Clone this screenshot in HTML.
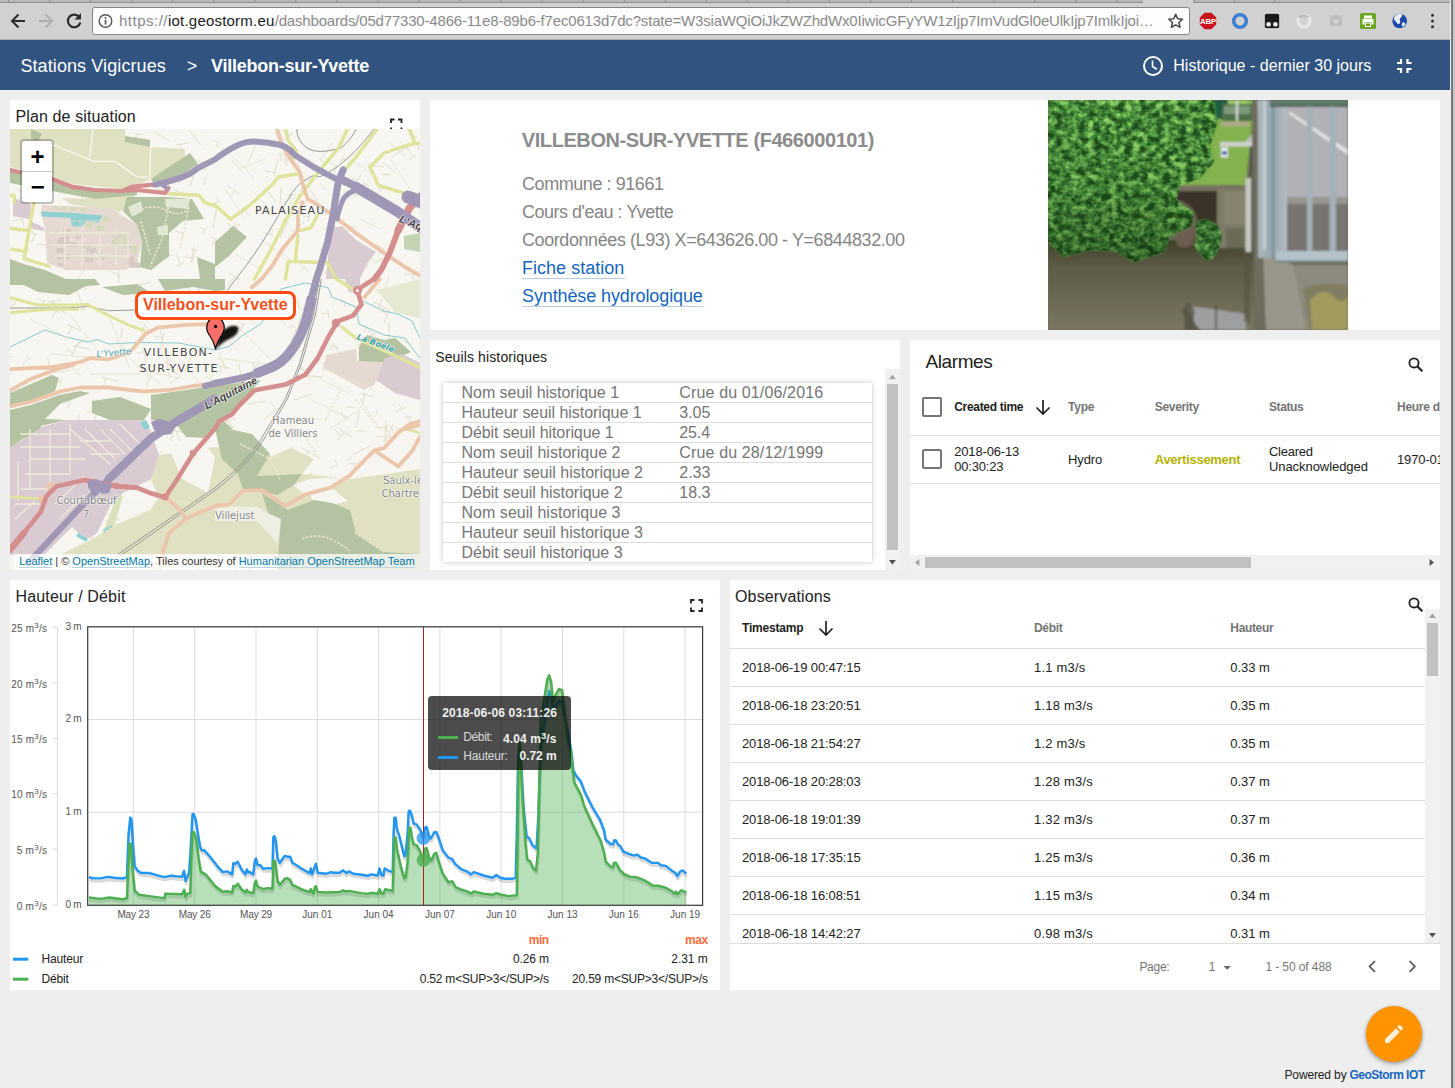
<!DOCTYPE html>
<html lang="fr">
<head>
<meta charset="utf-8">
<title>Villebon-sur-Yvette</title>
<style>
html,body{margin:0;padding:0;}
body{width:1455px;height:1088px;overflow:hidden;background:#eeeeee;font-family:"Liberation Sans",sans-serif;color:#212121;position:relative;}
.abs{position:absolute;}
.t{position:absolute;white-space:nowrap;line-height:1;}
svg{position:absolute;display:block;overflow:visible;}
#chrome{left:0;top:0;width:1455px;height:40px;background:#d1d1d1;}
#hdr{left:0;top:40px;width:1450px;height:50px;background:#30547f;color:#fff;}
.w{position:absolute;background:#fff;overflow:hidden;}
#wmap{left:10px;top:100px;width:410px;height:470px;}
#winfo{left:430px;top:100px;width:1010px;height:230px;}
#wseuil{left:430px;top:340px;width:470px;height:230px;}
#walarm{left:910px;top:340px;width:530px;height:230px;}
#wchart{left:10px;top:580px;width:710px;height:410px;}
#wobs{left:730px;top:580px;width:710px;height:410px;}
#edge{left:1450px;top:0;width:5px;height:1088px;background:linear-gradient(90deg,#eeeeee 0,#eeeeee .6px,#a8a8a8 .7px,#6c6c6c 1.8px,#787878 2.6px,#c4c4c4 3.3px,#c8c8c8 4.5px,#909090 5px);}
.ln{position:absolute;background:#e0e0e0;height:1px;}
.cb{position:absolute;width:16px;height:16px;border:2px solid #757575;border-radius:2px;}
.ml{position:absolute;white-space:nowrap;line-height:1;font-family:"DejaVu Sans","Liberation Sans",sans-serif;text-shadow:0 0 2px #fff,0 0 2px #fff,0 0 1px #fff;}

</style>
</head>
<body>
<div id="chrome" class="abs"><div class="abs" style="left:0;top:0;width:1143px;height:3px;background:#b8b8b8;border-bottom:1px solid #8f8f8f;box-sizing:border-box"></div>
<div class="abs" style="left:1193px;top:0;width:262px;height:3px;background:#b8b8b8;border-bottom:1px solid #8f8f8f;box-sizing:border-box"></div>
<svg style="left:0;top:0" width="1455" height="3" viewBox="0 0 1455 3"><rect x="8.0" y="0" width="1" height="2.500" fill="#8f8f8f"/><rect x="49.0" y="0" width="1" height="2.500" fill="#8f8f8f"/><rect x="90.1" y="0" width="1" height="2.500" fill="#8f8f8f"/><rect x="131.1" y="0" width="1" height="2.500" fill="#8f8f8f"/><rect x="172.2" y="0" width="1" height="2.500" fill="#8f8f8f"/><rect x="213.2" y="0" width="1" height="2.500" fill="#8f8f8f"/><rect x="254.3" y="0" width="1" height="2.500" fill="#8f8f8f"/><rect x="295.3" y="0" width="1" height="2.500" fill="#8f8f8f"/><rect x="336.4" y="0" width="1" height="2.500" fill="#8f8f8f"/><rect x="377.4" y="0" width="1" height="2.500" fill="#8f8f8f"/><rect x="418.5" y="0" width="1" height="2.500" fill="#8f8f8f"/><rect x="459.5" y="0" width="1" height="2.500" fill="#8f8f8f"/><rect x="500.6" y="0" width="1" height="2.500" fill="#8f8f8f"/><rect x="541.6" y="0" width="1" height="2.500" fill="#8f8f8f"/><rect x="582.7" y="0" width="1" height="2.500" fill="#8f8f8f"/><rect x="623.8" y="0" width="1" height="2.500" fill="#8f8f8f"/><rect x="664.8" y="0" width="1" height="2.500" fill="#8f8f8f"/><rect x="705.8" y="0" width="1" height="2.500" fill="#8f8f8f"/><rect x="746.9" y="0" width="1" height="2.500" fill="#8f8f8f"/><rect x="787.9" y="0" width="1" height="2.500" fill="#8f8f8f"/><rect x="829.0" y="0" width="1" height="2.500" fill="#8f8f8f"/><rect x="870.0" y="0" width="1" height="2.500" fill="#8f8f8f"/><rect x="911.1" y="0" width="1" height="2.500" fill="#8f8f8f"/><rect x="952.1" y="0" width="1" height="2.500" fill="#8f8f8f"/><rect x="993.2" y="0" width="1" height="2.500" fill="#8f8f8f"/><rect x="1034.2" y="0" width="1" height="2.500" fill="#8f8f8f"/><rect x="1075.3" y="0" width="1" height="2.500" fill="#8f8f8f"/><rect x="1116.3" y="0" width="1" height="2.500" fill="#8f8f8f"/><rect x="1193.5" y="0" width="1" height="2.500" fill="#8f8f8f"/><rect x="1233.8" y="0" width="1" height="2.500" fill="#8f8f8f"/><rect x="1274.0" y="0" width="1" height="2.500" fill="#8f8f8f"/></svg>
<div class="abs" style="left:0;top:39px;width:1450px;height:1px;background:#aeaba6"></div>
<div class="abs" style="left:92px;top:7px;width:1098px;height:28px;box-sizing:border-box;background:#fdfdfd;border:1px solid #858585;border-radius:2.500px"></div>
<svg style="left:0;top:0" width="1455" height="40" viewBox="0 0 1455 40">
<g fill="none" stroke="#2b2b2b" stroke-width="2">
<path d="M25 21H12.5M18.5 14.5L12 21l6.500 6.500"/>
</g>
<g fill="none" stroke="#b0b0b0" stroke-width="2">
<path d="M39 21H51.500M45.500 14.500L52 21l-6.500 6.500"/>
</g>
<g fill="none" stroke="#2b2b2b" stroke-width="2.200">
<path d="M79.500 17.500A6.300 6.300 0 1 0 80.300 22.500"/>
</g>
<path d="M81 13v6.500h-6.500z" fill="#2b2b2b"/>
<circle cx="105.500" cy="21" r="6.300" fill="none" stroke="#555" stroke-width="1.400"/>
<rect x="104.700" y="19.800" width="1.700" height="4.700" fill="#555"/><rect x="104.700" y="17" width="1.700" height="1.700" fill="#555"/>
<path d="M1175.700 14.200l2 4.500 4.900.5-3.700 3.300 1.100 4.800-4.300-2.500-4.300 2.500 1.100-4.800-3.700-3.300 4.900-.5z" fill="none" stroke="#444" stroke-width="1.500" stroke-linejoin="round"/>
<!-- ABP -->
<path d="M1204.600 12.800h6.800l4.800 4.800v6.800l-4.800 4.800h-6.800l-4.800-4.800v-6.800z" fill="#c8141c"/>
<text x="1208" y="23.900" font-family="Liberation Sans, sans-serif" font-weight="700" font-size="7.800" fill="#fff" text-anchor="middle" letter-spacing="-0.200">ABP</text>
<!-- blue ring -->
<circle cx="1240" cy="21" r="6.300" fill="none" stroke="#3f7fcf" stroke-width="3.600"/>
<!-- black box -->
<rect x="1264.300" y="13.300" width="15.400" height="15.400" rx="2.500" fill="#1b1b1b" stroke="#f4f4f4" stroke-width="0.800"/>
<circle cx="1268.600" cy="24.300" r="2.400" fill="#e8e8e8"/><circle cx="1275.400" cy="24.300" r="2.400" fill="#e8e8e8"/>
<!-- swirl -->
<circle cx="1304" cy="21" r="6" fill="none" stroke="#e6e6e6" stroke-width="3.500"/>
<path d="M1299 17.500a6 6 0 0 1 9 0" fill="none" stroke="#bdbdbd" stroke-width="3"/>
<!-- camera -->
<path d="M1330 16.500h3l1.200-1.800h3.600l1.200 1.800h3v9.500h-12z" fill="#bdbdbd"/><circle cx="1336" cy="21.300" r="2.600" fill="#d1d1d1"/>
<!-- printer -->
<rect x="1360" y="13" width="16" height="16" rx="1.500" fill="#6aa624"/>
<path d="M1364 15.500h8v3h-8zM1362.500 19h11v5.500h-2v-2.500h-7v2.500h-2zM1365 22.500h6v4.500h-6z" fill="#fff"/>
<rect x="1366" y="23.500" width="4" height="2.500" fill="#6aa624"/>
<!-- globe -->
<circle cx="1399.700" cy="21" r="7.300" fill="#1c4aa8"/>
<path d="M1395 16c2-2 5-2.500 7-1.500 1 1.500-1 2.500-2 4s1 3 0 4.500-3 1-3.500-.5-2.500-2-2.500-3.500.5-2 1-3z" fill="#e9eef8"/>
<path d="M1403 22c1 0 2.500 1 2.500 2.500-1 1.500-2.500 2.500-3.500 2-.500-1.500 0-3.500 1-4.500z" fill="#dfe7f5"/>
<!-- menu -->
<circle cx="1432.500" cy="15.300" r="1.500" fill="#333"/><circle cx="1432.500" cy="21" r="1.500" fill="#333"/><circle cx="1432.500" cy="26.700" r="1.500" fill="#333"/>
</svg>
<span class="t" style="top:13.00px;font-size:15px;left:119.00px;color:#8a8a8a;letter-spacing:0.496px;">https://</span>
<span class="t" style="top:13.00px;font-size:15px;left:168.00px;color:#1a1a1a;letter-spacing:0.207px;">iot.geostorm.eu</span>
<span class="t" style="top:13.00px;font-size:15px;left:274.70px;color:#8a8a8a;letter-spacing:-0.181px;">/dashboards/05d77330-4866-11e8-89b6-f7ec0613d7dc?state=W3siaWQiOiJkZWZhdWx0IiwicGFyYW1zIjp7ImVudGl0eUlkIjp7ImlkIjoi…</span></div>
<div id="hdr" class="abs"><span class="t" style="top:17.00px;font-size:18px;left:20.40px;color:#fff;letter-spacing:0.097px;">Stations Vigicrues</span>
<span class="t" style="top:17.00px;font-size:18px;left:186.80px;color:#fff;letter-spacing:-2.316px;">&gt;</span>
<span class="t" style="top:17.00px;font-size:18px;left:211.00px;font-weight:700;color:#fff;letter-spacing:-0.248px;">Villebon-sur-Yvette</span>
<span class="t" style="top:18.00px;font-size:16px;left:1173.30px;color:#fff;letter-spacing:0.020px;">Historique - dernier 30 jours</span>
<svg style="left:0;top:0" width="1450" height="50" viewBox="0 40 1450 50">
<circle cx="1153" cy="66" r="9" fill="none" stroke="#fff" stroke-width="2"/>
<path d="M1152.500 60.500v6l4.500 2.700" fill="none" stroke="#fff" stroke-width="1.600"/>
<g fill="none" stroke="#fff" stroke-width="2.200">
<path d="M1397 63h4v-4M1411.500 63h-4v-4M1397 69h4v4M1411.500 69h-4v4"/>
</g>
</svg></div>
<div id="wmap" class="w"><span class="t" style="top:9.00px;font-size:16px;left:5.40px;letter-spacing:0.129px;">Plan de situation</span>
<svg style="left:0;top:0" width="410" height="30" viewBox="10 100 410 30"><path d="M391 123v-3.500h3.500M398 119.500h3.500v3.500M401.500 127.500v3.500h-3.500M394.500 131h-3.500v-3.500" fill="none" stroke="#212121" stroke-width="1.800"/></svg>
<div id="mapc" class="abs" style="left:0;top:29px;width:410px;height:441px;overflow:hidden;background:#f5f4ed">
<svg style="left:0;top:0" width="410" height="441" viewBox="0 0 410 441">
<rect width="410" height="441" fill="#f7f6f0"/>
<path d="M97 45l7 2M101 46l-2 6M406 26l-7 5M404 28l-7 -9M340 356l7 9M300 377l-12 10M207 78l-4 21M386 371l15 3M348 224l10 2M351 225l-1 6M327 36l-3 10M193 151l-7 19M181 81l10 4M371 45l10 1M353 54l6 3M355 55l-5 11M117 298l-8 7M318 181l1 9M318 184l-7 1M394 146l13 -1M403 146l1 12M234 194l-4 8M233 196l-5 -3M277 66l15 0M281 66l-0 11M120 440l-5 9M119 442l-6 -4M102 392l-3 6M101 394l-5 -3M95 384l18 9M100 386l-4 8M395 288l7 -0M400 288l0 11M379 148l-6 15M216 289l7 10M221 296l-5 3M257 84l7 3M274 27l11 8M278 30l-4 6M327 93l19 6M340 97l-3 10M360 243l-6 15M231 346l-0 7M200 381l7 2M371 131l-7 3M156 347l10 15M164 34l-11 6M318 30l-11 17M315 34l-7 -5M152 72l18 9M166 79l-2 4M69 286l-0 14M199 33l-5 9M197 36l-10 -5M1 23l-18 10M233 413l-4 12M230 421l-7 -2M271 59l-1 17M117 414l-6 10M38 178l11 5M46 181l-4 8M215 333l-2 19M65 258l-7 21M60 273l-11 -4M71 211l-10 16M63 224l-6 -4M246 396l-4 9M243 401l-11 -5M369 176l10 5M374 179l-3 5M368 202l-10 7M363 206l-4 -6M396 278l-10 5M392 280l-3 -5M381 394l1 10M382 401l-5 1M324 300l7 7M84 419l1 7M119 393l13 10M360 317l-16 8M206 68l4 6M209 72l-5 3M160 301l12 2M163 301l-2 11M8 423l7 3M6 102l17 -0M18 102l0 12M290 406l9 2M77 209l-13 9M246 16l-8 18M126 395l-7 3M123 396l-2 -4M400 17l-19 11M395 20l-5 -8M204 241l-5 16M201 250l-5 -2M127 224l9 -2M134 223l2 11M399 5l9 4M141 433l12 4M147 435l-1 4M209 224l7 16M211 229l-4 2M364 411l11 17M380 181l-6 13M378 185l-6 -3M375 58l-17 14M371 62l-4 -4M383 295l-6 15M379 303l-5 -2M38 229l3 21M40 240l-9 1M372 33l14 11M329 298l7 8M334 305l-7 6M149 437l5 4M151 438l-7 9M381 297l7 15M43 88l14 7M48 91l-3 7M166 16l12 -2M171 15l1 11M385 299l17 4M78 154l-3 7M77 158l-6 -2M222 415l7 17M228 429l-8 3M144 3l16 9M294 93l-12 9M197 429l16 -2M246 320l10 -0M255 59l11 14M152 322l-9 7M223 161l-10 17M218 171l-5 -3M65 243l6 4M358 36l16 2M108 25l-4 10M312 234l10 2M314 234l-1 8M350 373l2 17M323 14l-13 17M83 405l-1 6M82 407l-8 -2M174 41l-14 7M225 304l3 21M396 228l-7 4M238 275l18 -3M174 134l-8 3M170 135l-4 -11M186 432l15 1M197 433l-0 9M298 421l-4 8M295 427l-10 -5M289 235l11 16M292 239l-5 3M368 281l-3 7M14 2l17 3M26 4l-1 7M264 170l-6 12M141 19l6 2M178 325l-8 9M173 330l-3 -3M149 335l-10 18M142 346l-6 -4M35 171l-4 6M34 173l-6 -4M143 398l16 3M162 403l-1 11M162 409l-5 -1M200 435l-14 5M379 126l-13 7M334 302l8 6M379 194l0 21M177 158l7 9M180 162l-9 7M375 430l-7 17M381 327l-17 9M399 14l16 3M409 16l-1 5M7 421l4 5M9 423l-5 4M134 198l-3 6M133 201l-9 -4M262 99l-0 9M262 105l-8 -0M78 421l-2 10M78 424l-10 -2M376 291l-0 10M376 299l-11 -1M23 344l1 10M24 348l-5 1M349 282l-3 17M289 189l7 3M291 190l-3 7M354 232l-3 15M353 241l-6 -1M3 176l-10 4M333 69l-14 16M160 240l8 5M222 31l9 11M265 3l7 17M270 15l-8 3M111 402l12 -2M302 265l-17 6M201 108l6 3M205 110l-3 7M217 56l12 9M225 62l-4 5M406 436l-2 14M405 439l-9 -1M307 398l-4 13M304 406l-5 -2M124 4l9 2M127 5l-2 6M257 176l16 7M264 179l-3 6M85 285l15 2M343 234l-15 11M52 23l12 3M57 24l-2 8M159 57l-2 10M158 63l-11 -3M217 162l-1 9M216 169l-9 -1M63 217l17 3M82 338l14 3M379 13l16 14M112 199l-1 10M294 409l15 13M299 414l-4 5M234 78l5 9M236 82l-8 4M168 321l13 3M236 415l-3 10M235 418l-9 -2M181 228l-7 15M372 170l-4 11M370 176l-7 -3M347 153l-5 11M346 157l-10 -4M349 127l15 4M359 130l-3 11M324 330l5 8M327 335l-7 5M26 424l12 -2M35 423l1 5M209 206l15 10M216 212l-3 4M377 295l-2 18M376 308l-10 -1M343 424l-6 18M234 411l-12 17M229 418l-7 -5M127 407l-6 10M93 139l17 8M16 225l5 6M20 229l-7 6M250 234l-6 5M245 238l-3 -4M236 386l19 7M243 389l-3 7M304 49l-15 5M268 25l13 0M271 25l-0 8M27 115l18 2M181 295l-3 14M347 216l17 0M162 126l-6 3M160 127l-4 -7M351 46l-6 8M347 52l-6 -4M74 51l-2 20M73 57l-12 -1M232 437l10 4M108 132l1 22M214 403l-4 12M322 213l7 10M325 216l-6 5M300 85l-2 8M299 88l-6 -1M391 210l8 5M23 277l-4 12M293 137l5 5M294 138l-4 4M194 343l19 6M207 348l-3 8M141 287l18 3M154 289l-2 11M163 60l18 8M167 62l-3 6M310 120l6 3M314 122l-4 8M246 396l13 2M253 397l-1 10M296 173l4 12M298 178l-9 3M337 278l8 1M219 144l11 7M224 148l-6 9M330 170l17 9M336 173l-2 5M249 327l15 6M256 330l-4 10M174 292l10 4M180 294l-3 6M381 306l-1 14M381 312l-8 -1M351 264l13 4M355 265l-3 10M111 267l-2 7M356 151l16 14M58 196l13 6M62 197l-4 9M279 196l11 5M286 200l-5 11M113 44l-14 8M103 50l-5 -9M203 291l15 2M213 292l-1 7M64 153l7 20M277 217l15 6M171 72l12 5M181 75l-3 9M150 226l17 0M158 226l-0 10M82 298l15 4M325 383l18 7M337 388l-2 6M331 283l5 9M228 423l-2 19M227 434l-6 -1M197 353l1 11M197 356l-9 1M230 95l-9 15M227 100l-10 -6M282 334l-7 5M279 336l-3 -3M365 115l10 6M373 119l-4 7M348 152l-2 7M297 66l-2 11M295 75l-9 -2M320 216l8 3M271 278l-17 12M266 281l-6 -9M341 382l11 0M77 85l18 -0M91 85l0 6M204 12l6 2M208 13l-2 5M265 166l-0 20M264 176l-7 -0M99 121l-18 8M90 125l-4 -7M42 425l-10 4M34 428l-2 -6M269 408l3 6M278 93l-8 16M238 360l6 3M242 362l-2 5M49 358l21 3M346 302l8 -0M151 52l3 6M289 31l-1 15M107 41l-1 9M106 46l-8 -1M157 52l-6 11M155 57l-7 -4M198 441l7 4M201 442l-6 9M320 33l7 5M323 137l-2 8M322 143l-10 -2M180 81l-6 9M291 318l18 11M298 323l-4 7M246 315l-13 7M221 358l-10 7M218 360l-3 -4M74 328l9 6M3 227l-10 5M40 60l-9 13M34 68l-9 -6M111 77l-4 8M22 359l11 8M26 362l-7 8M171 246l-11 9M332 27l4 6M334 30l-5 3M339 335l14 -2M344 334l1 7M179 150l15 6M190 154l-3 7M89 275l-5 19M86 284l-9 -2M317 141l3 5M318 142l-6 4M91 248l17 4M96 249l-3 10M228 96l-9 4M226 97l-2 -4M141 246l-5 11M324 372l-12 17M125 317l12 7M350 61l5 9M351 64l-8 4M181 120l7 2M185 121l-3 11M37 173l14 -2M44 172l1 8M37 358l-4 10M292 246l21 2M124 157l17 -4M130 156l2 8M271 421l-12 9M263 426l-5 -6M268 30l-4 18M265 44l-10 -2M307 365l-1 15M306 376l-7 -0M36 279l-3 16M33 292l-12 -2M6 283l17 -3M140 26l-6 11M138 30l-4 -2M11 82l3 16M13 90l-11 2M340 134l-14 11M16 114l3 8M18 120l-5 2M342 328l-6 4M289 46l0 7M322 391l7 2M287 169l2 10M161 51l10 3M363 249l21 3M174 103l-3 9M173 105l-9 -4M23 341l-5 9M20 346l-9 -5M154 203l-4 18M152 209l-8 -2M47 18l-4 10M352 420l6 8M355 424l-4 3M273 17l4 20M226 289l-13 5M217 293l-4 -9M266 423l-1 19M208 237l12 2M211 237l-1 7M283 4l-17 12M272 12l-6 -9M370 388l0 8M41 173l16 12M88 314l19 -2M95 314l1 9M330 417l9 19M134 195l4 6M159 69l-12 11M152 75l-6 -7M387 405l-10 6M379 409l-5 -8M59 351l16 7M65 354l-3 7M356 136l-17 14M347 143l-4 -5M21 103l6 3M25 105l-4 9M312 435l-19 7M196 99l-4 7M195 101l-5 -3M362 242l-10 16M359 247l-8 -5M38 177l11 7M186 440l13 6M196 48l-2 8M179 1l12 15M405 110l-1 6M404 113l-6 -1M77 138l-9 11M101 420l8 2M79 361l8 -1M7 170l-5 11M5 174l-8 -4M186 39l-6 19M183 48l-5 -1M306 142l-3 11M7 59l16 15M14 65l-6 6M314 99l12 -1M321 98l0 7M229 235l3 20M77 123l-7 2M357 198l-3 5M357 199l-7 -3M162 292l8 20M156 325l-8 17M310 54l7 8M268 370l-1 11M267 378l-11 -1M184 117l-3 17M182 129l-9 -1M71 173l4 9M74 179l-4 2M214 344l-7 13M209 353l-4 -3M51 250l-1 7M51 253l-10 -1M14 394l8 -1M17 393l1 6M215 272l0 14M216 281l-8 0M158 234l7 11" fill="none" stroke="#e3dfcc" stroke-width="1"/>
<!-- farmland -->
<g fill="#e0e1c3">
<path d="M0 0H115V10L141 18 175 20V31L141 50 128 56 113 60 62 55 42 47 0 38Z"/>
<path d="M52 69L85 70 113 66 127 64 118 75 110 83 60 75Z"/>
<path d="M149 326L205 318 262 327 281 319 304 330 292 345 340 350 410 340V426H50L85 409 107 395 141 381 148 369 141 350Z"/>
<path d="M367 161L410 150V190L385 183Z" fill="#e8e9d3"/>
</g>
<!-- white patches inside farmland -->
<g fill="#f6f5ef">
<path d="M110 370L141 374 141 381 110 394Z"/>
<path d="M160 322L196 316 205 328 198 364 172 350Z"/>
<path d="M283 356L300 350 338 347 364 322 388 304 410 293V340L339 350 320 359 296 366Z"/>
<path d="M300 366L322 359 338 372 322 376 303 372Z"/>
<path d="M205 377L247 378 258 384 271 390 268 415 247 392H205Z" fill="#efeee2"/>
</g>
<!-- forest -->
<g fill="#b4c3a1">
<path d="M21 0L32 5 28 12 21 10Z"/>
<path d="M115 7L141 11 140 18 115 13Z"/>
<path d="M0 42L42 50 62 59 85 62 113 63 127 62 127 66 85 70 42 62 0 54Z"/>
<path d="M141 50L180 24 188 35 156 56 145 57Z"/>
<path d="M117 68H155L182 70 194 90 173 92 159 104V127L141 141 130 138 132 113 127 96 113 82Z"/>
<path d="M0 130L14 135 35 141 56 150 85 150 90 156 76 157 59 166 28 163 14 156 0 156Z"/>
<path d="M92 158L127 155 141 164 113 166Z"/>
<path d="M148 150H215V161L205 162 183 158 155 162Z"/>
<path d="M205 113L223 97 237 108 219 127 205 138Z"/>
<path d="M187 128L205 135V150H190Z"/>
<path d="M0 264L42 246 49 249 45 262 21 272 0 277Z"/>
<path d="M0 281L21 276 49 266 70 262 80 264 50 275 35 290 56 291 31 297 28 308 14 309 0 319Z"/>
<path d="M82 272L110 268 141 280 134 291H100L82 284Z"/>
<path d="M141 266L183 260 200 257 205 257 251 251 242 261 228 277 212 291 223 300 205 300 195 309 176 308 166 295 141 291Z"/>
<path d="M205 300L219 300 242 305 252 316 260 325 247 347 292 345 284 356 267 366 253 362 233 361 228 345 212 330Z"/>
<path d="M252 364L278 381 304 371 322 374 340 381 346 404 374 423 410 425V441H267L271 390 258 384Z"/>
<path d="M349 218L357 206 374 211 385 209 401 223 374 235 349 232Z"/>
<path d="M394 107L410 104V123L394 120Z" fill="#c5d3b5"/>
</g>
<!-- light green / parks -->
<g fill="#dfe9d4">
<path d="M118 78L131 72 133 82 122 88Z"/><path d="M155 70H180L178 80 156 78Z"/><path d="M147 98L158 96 158 106 148 106Z"/>
<path d="M107 364L113 367 104 398 90 408 98 392Z" fill="#d9e2bd"/>
</g>
<!-- campus -->
<g fill="#e5d9d1">
<path d="M32 76L99 79 110 85 127 96 132 113 127 134 115 141H56L37 134 35 99 31 85Z"/>
<path d="M316 226L346 220 347 232 374 233 364 256 354 261 314 239Z"/>
</g>
<g fill="#d8cbc5"><rect x="76" y="119" width="10" height="4"/><rect x="81" y="120" width="5" height="4"/><rect x="90" y="127" width="5" height="4"/><rect x="47" y="127" width="9" height="3"/><rect x="119" y="133" width="9" height="5"/><rect x="53" y="100" width="8" height="3"/><rect x="55" y="107" width="4" height="4"/><rect x="75" y="128" width="8" height="5"/><rect x="80" y="122" width="7" height="3"/><rect x="120" y="134" width="10" height="5"/><rect x="65" y="107" width="6" height="3"/><rect x="101" y="113" width="10" height="4"/><rect x="117" y="129" width="4" height="3"/><rect x="113" y="115" width="11" height="4"/><rect x="46" y="121" width="9" height="3"/><rect x="47" y="111" width="11" height="5"/><rect x="49" y="108" width="5" height="3"/><rect x="104" y="105" width="8" height="4"/><rect x="55" y="125" width="5" height="5"/><rect x="49" y="114" width="5" height="3"/><rect x="118" y="127" width="6" height="6"/><rect x="57" y="113" width="10" height="5"/><rect x="48" y="134" width="5" height="3"/><rect x="102" y="111" width="6" height="3"/><rect x="47" y="119" width="6" height="5"/><rect x="70" y="115" width="11" height="4"/></g><path d="M40 104h80M42 116h84M45 127h75M55 98v38M72 96v42M90 98v40M106 100v36M118 104v28M60 110q8 6 16 0M84 124q6 6 12 0" fill="none" stroke="#efe9dc" stroke-width="1.300"/><g fill="#d3dcb8"><rect x="43" y="77" width="5" height="3"/><rect x="51" y="77.500" width="6" height="3"/><rect x="60" y="78" width="6" height="3"/><rect x="70" y="79" width="7" height="3"/><rect x="93" y="88" width="7" height="5"/><rect x="105" y="108" width="4" height="8"/><rect x="113" y="106" width="4" height="9"/><rect x="122" y="116" width="5" height="8"/><rect x="76" y="94" width="6" height="5"/><rect x="87" y="97" width="7" height="5"/></g>
<!-- industrial -->
<g fill="#d9cbd1">
<path d="M3 69L21 75 20 90 3 87Z"/><path d="M21 92L34 99V102L18 99Z"/>
<path d="M323 99L332 97 346 111 366 123 357 134 350 150H316L318 127Z"/>
<path d="M335 150H350V158L339 164Z"/>
<path d="M375 229L392 225 410 234V271L385 264 366 251Z"/>
<path d="M0 319L32 298 56 291H134L141 302 149 326 141 350 113 364 101 375 87 404 76 411 62 398 35 425 0 426Z"/>
</g>
<!-- water -->
<g fill="#8fd1d3">
<path d="M31 82.500L63 84 92.500 86.500 88.500 94 76.500 92 71 98 62 97 60.500 89 32 87.500Z"/>
<path d="M130 294l6-3 4 7-5 3z"/><path d="M68 404l10 6-2 3-10-6z"/><path d="M93 401l9-5 1 2-9 5z"/>
</g>
<g fill="none" stroke="#86ccd0" stroke-width="1">
<path d="M0 218L35 201 56 208 78 213 87 210.500 99 215 127 213.500 169 214 205 221 219 217.600 233 206 251 195 271 160 295 154 318 158.500 322 168 346 178 349 195 374 206 395 209 405 223 410 229"/>
<path d="M354 172.500L374 182 388 185 402 192 410 209"/>
</g>
<!-- minor roads -->
<g fill="none" stroke="#fbfaf4" stroke-width="1.200">
<path d="M42 15.500L84.500 32.400H105.700L126.800 48H138M83 0L79.600 28M141 8.500L139.500 52"/>
</g>
<g fill="none" stroke="#e3dfcd" stroke-width="0.800">
<path d="M45 92h60M50 105h70M60 118h60M55 128h55M70 92v40M95 95v38M110 100v30"/>
<path d="M10 305h50M10 318h60M20 330h55M15 345h45M10 360h30M20 300v60M40 300v55M60 295v50M75 300l30 30M90 300l25 25M5 375h25M5 390l20-18M10 405l25-25M45 375l30 -28M50 390l25-25M60 300l40 35M100 300l30 30M110 295l25 25M70 312h30M80 325h30M8 332v40" stroke="#efead8" stroke-width="1.400"/>
<path d="M20 190l40 20M60 185l30 40M100 190l20 50M40 225l60 5M120 230l30 25M150 200l10 50M170 230l20 25M30 245l40 -5M80 245h50M130 240l40 10"/>
<path d="M215 20l30 30M230 40l25 -10M240 60l20 20M215 60l20 30M330 60l30 10M340 30l30 20M380 30l20 30M350 90l20 10M300 60l15 25M250 110l30 20M225 125l25 15"/>
<path d="M215 170l30 25M230 200l30 30M260 180l20 20M215 230l40 5M310 250l30 15M300 270l40 20M320 300l30 -20M350 270l20 30"/>
</g>
<g fill="none" stroke="#ebe6d2" stroke-width="1.600" stroke-dasharray="2.500 1.600">
<path d="M131 80Q145 75 158 82T180 78M160 70L152 110 140 138M131 92L140 125M178 82L170 120"/>
<path d="M230 315L260 330 283 318M260 330L270 350M290 300l20 30M300 345l30 5M345 404L374 423M292 410q15 -6 28 0t20 12"/>
<path d="M110 394L141 381 148 369M85 409L107 395M50 426L85 409M150 369L205 380"/>
<path d="M315 240L365 262M330 262l-15 30M345 270l20 25M290 290l30 0"/>
</g>
<!-- rail -->
<g fill="none" stroke="#8f8f8f" stroke-width="0.900">
<path d="M286.700 0Q287 12 297 19T331 19Q342 10 346 0"/>
<path d="M364 0Q350 18 339 28T318 44 303.600 46.500Q290 52 282.500 63.400T261 99 226 150 213 175"/>
<path d="M0 179H56L77.500 177.500 98.600 181.700 126.800 181"/>
<path d="M309.300 150L303.600 185 289.500 234.500 275.400 269.700 257 300 250 312Q235 335 205 358.600L107 426"/>
<path d="M311.300 150L305.600 185 291.500 234.500 277.400 270 259 301 252 313.500Q237 336.500 207 360L110 427"/>
</g>
<!-- yellow tertiary -->
<g fill="none" stroke="#dfe39c" stroke-width="3.400" stroke-linecap="round" stroke-linejoin="round">
<path d="M159 64.800L189 66.200 194.400 73.300 205 76.800"/>
<path d="M0 66.200H4.200V73M24 73.300L14 129.600 39.400 137.400M0 99.300L18.300 101.400M0 119.800L15.500 122.600"/>
<path d="M205 76L220.500 90.200 240 76 261.400 56.400 268.400 48 286.700 45"/>
<path d="M275.400 0L278.300 11.300 286.700 22.500 283 30"/>
<path d="M337.400 0L329 18.300 315 35.200 303.600 49.300 289.500 67.600 275.400 91.600 261.400 119.800 244.400 150"/>
<path d="M360 38L374 24 399.400 15.500 410 14M360 38L368.400 56.400 396.600 64.800M399.400 0L405 14"/>
<path d="M367 0L346 28.200 334.600 41"/>
<path d="M278.300 132.400L317.700 133.800 326 150M278.300 132.400L275.400 150M288 105.600L285.300 132.400"/>
<path d="M291 101.400L300.800 98.600 307.800 86"/>
<path d="M0 168.300L14 172.500 28.200 176H63.400L77.500 175.400 98.600 186.600 119.800 196.500 133.800 201.400" stroke-width="3"/>
<path d="M0 183.800L21 181.700 42 180.300H67.600" stroke-width="3"/>
<path d="M326.200 150L343 160M331.800 198L346 209.200 381 224.700 410 238.700"/>
<path d="M0 367.800L31 369.900" stroke-width="2.600"/>
<path d="M396 300l14 4" stroke-width="2.600"/>
</g>
<!-- orange secondary -->
<g fill="none" stroke="#ecc6ab" stroke-width="3.800" stroke-linecap="round" stroke-linejoin="round">
<path d="M267 0L272.600 17 281 31 289.500 42.300 295.200 63.400 298 70.400 303.600 73.300 320.500 84.500 346 104.300 374 124 395 138 410 146.500"/>
<path d="M292.300 73.300L288 87.300V101.400L272.600 119.800 261.400 138 251.500 150 241.600 158.500"/>
<path d="M0 240.200L42.300 238 70.400 233 80.300 229 98.600 230.300 119.800 223.300 129.600 212 135.200 205 148 198.600 176 195.800 205 195"/>
<path d="M0 261.300L21 250 46.500 240.200 63.400 236"/>
<path d="M0 277.500L21 272.600 49.300 262.700 70.400 258.500H98.600L133.800 262.700 162 260.600 183 257 205 254.500"/>
<path d="M369.800 150L354.300 168.300"/>
<path d="M157.800 370L172 382.600 176 389.600 205 377 219 375.500 233.200 361.400H252.900L275.400 377 295.200 365.700 320.500 358.600 338.800 347.400 364.200 321.300 374 319.200 388.200 303.700 399.400 295.200 410 292.400"/>
<path d="M176 389.600L159.200 403.700 152 426.200 150 441"/>
<path d="M365.600 322L388.200 337.500 402.200 322 410 308"/>
<path d="M395 300L410 296" />
<circle cx="40" cy="357" r="2" /><circle cx="32" cy="370" r="2"/>
</g>
<!-- red primary -->
<g fill="none" stroke="#d58e8e" stroke-linecap="round" stroke-linejoin="round">
<path d="M0 41L42.300 50 62 57.800 84.500 61 112.700 62 121.200 57.800 145 55.400M112.700 62L126.800 61 155 64 158.500 59" stroke-width="4.200"/>
<path d="M410 67.600L399.400 79 388.200 101.400 379.700 124 371.200 141 364.200 150 353 157 347.300 161.300 351.500 175.400 343 186.600 327.600 192.300 317.700 209.200 307.800 229 295.200 245.800 275.400 255.600 244.400 261.300 229 276.800 222 285.200 209.200 292.300 205 299.500 183 324.800 169 347.400 155 368.500 141 364.300 126.800 358.600 107 357.200 74.700 351 46.500 357.200 36.600 367 31 382.600 14 403.700 0 420.600" stroke-width="4.600"/>
<path d="M0 421L14 404" stroke-width="6.500"/>
<path d="M412 66L399.400 79 388.200 101.400" stroke-width="7.500"/><path d="M388.200 101.400L379.700 124 371.200 141 364.200 150" stroke-width="5.800"/>
</g>
<g fill="#d58e8e"><circle cx="347.500" cy="161.500" r="4.600"/><circle cx="326" cy="194" r="4.200"/><circle cx="155" cy="368" r="3.600"/><circle cx="183" cy="324" r="3.300"/><circle cx="107" cy="357" r="3.200"/></g>
<g fill="#f5f4ed"><circle cx="347.500" cy="161.500" r="1.500"/></g>
<!-- motorway -->
<g fill="none" stroke="#a097b7" stroke-linecap="round" stroke-linejoin="round">
<path d="M145 55.600Q158 53 169 49.300T187.400 39.400L205 30.300Q216 22 226 17T247.300 12.700 268.400 15.500 284 25.400L303.600 38 324.800 49.300 346 57.800" stroke-width="6"/>
<path d="M151 55L157.500 59.500" stroke-width="4"/>
<path d="M333 51L346 57.500" stroke-width="8"/><path d="M346 58L367 70.400 388 83 414 101" stroke-width="10.500"/>
<path d="M333.200 41Q329 50 327.600 56.400L323.300 84.500 317.700 112.700 309.300 141 306.400 150 300.800 171 293.800 196.500Q288 212 279.700 223.300T258.500 240.200 233.200 248.600 205 254.300" stroke-width="7"/>
<path d="M352 60Q336 62 332 73T327 90" stroke-width="5"/>
<path d="M302 168L296 192Q290 210 281 222T262 238L245 245" stroke-width="10" stroke-linecap="butt"/>
<path d="M398 68L414 74" stroke-width="13"/>
<path d="M205 254.500L195 257" stroke-width="6"/>
<path d="M205 270L169 291 141 309.300 98.600 350.200" stroke-width="8.500"/>
<path d="M98.600 350.200L70.400 378.300 28.200 423.400 18 434" stroke-width="6.300"/>
</g>
<path d="M74.700 351L107 357.200 126.800 358.600" fill="none" stroke="#d58e8e" stroke-width="4.600" stroke-linecap="round"/>
<g fill="#a097b7"><path d="M141 293l8-3 8 2 9 5-5 8-7 1-4-5-6 0z"/><path d="M78 352l8 -2 16 6 -3 8 -7 1 -4 -4 -6 3 -4-6z"/></g>
</svg>

<span class="ml" style="left:245px;top:75.500px;font-size:11px;letter-spacing:1.150px;color:#444">PALAISEAU</span>
<span class="ml" style="left:133.500px;top:217.500px;font-size:11px;letter-spacing:1.300px;color:#444">VILLEBON-</span>
<span class="ml" style="left:129.500px;top:233.700px;font-size:11px;letter-spacing:1.300px;color:#444">SUR-YVETTE</span>
<span class="ml" style="left:87px;top:220.500px;font-size:8.500px;font-style:italic;color:#3c9ea3;transform:rotate(-5deg);transform-origin:0 100%">L'Yvette</span>
<span class="ml" style="left:346.500px;top:203.500px;font-size:8px;font-style:italic;font-weight:700;color:#3c9ea3;transform:rotate(20deg);transform-origin:0 50%;letter-spacing:.1px">La Boële</span>
<span class="ml" style="left:195px;top:272px;font-size:10.500px;font-style:italic;font-weight:700;color:#3e3e3e;font-family:'Liberation Sans',sans-serif;transform:rotate(-27.800deg);transform-origin:0 50%;letter-spacing:.1px">L'Aquitaine</span>
<span class="ml" style="left:390px;top:83.500px;font-size:10.500px;font-style:italic;font-weight:700;color:#3e3e3e;font-family:'Liberation Sans',sans-serif;transform:rotate(22deg);transform-origin:0 50%;letter-spacing:.35px">L'Aquitaine</span>
<span class="ml" style="left:46.500px;top:367px;font-size:10px;color:#858585">Courtabœuf</span>
<span class="ml" style="left:73px;top:380.500px;font-size:10px;color:#858585">7</span>
<span class="ml" style="left:262px;top:286.500px;font-size:10px;color:#858585">Hameau</span>
<span class="ml" style="left:258.500px;top:300px;font-size:10px;color:#858585">de Villiers</span>
<span class="ml" style="left:205px;top:381.500px;font-size:10px;color:#858585">Villejust</span>
<span class="ml" style="left:373px;top:346.500px;font-size:10px;color:#858585">Saulx-les-</span>
<span class="ml" style="left:371.500px;top:360px;font-size:10px;color:#858585">Chartreux</span>
<!-- marker shadow -->
<svg style="left:196px;top:188px" width="50" height="36" viewBox="0 0 50 36"><defs><filter id="bl" x="-30%" y="-30%" width="160%" height="160%"><feGaussianBlur stdDeviation="1.100"/></filter></defs>
<path d="M10 32.500L12.500 22Q15 12 25 9Q33 7.500 32.500 12.500Q31 19 23 22Q16 25 10 32.500Z" fill="#000" opacity=".920" filter="url(#bl)"/>
<path d="M9.500 32.500C8.500 26 6 22 3 17.500C-2 10 2 0.700 9.500 0.700S21 10 16 17.500C13 22 10.500 26 9.500 32.500Z" fill="#f9706a" stroke="#000" stroke-width="1.200"/>
<circle cx="9.500" cy="9.500" r="1.700" fill="#000"/></svg>
<!-- marker label -->
<div style="position:absolute;left:125px;top:162px;width:161px;height:29px;box-sizing:border-box;border:3px solid #ff4a12;border-radius:8px;background:#fff"></div>
<span class="t" style="left:133px;top:167.500px;font-size:16px;font-weight:700;color:#f4511e;letter-spacing:0">Villebon-sur-Yvette</span>
<!-- zoom control -->
<div style="position:absolute;left:10px;top:10px;width:30px;height:61px;border:2px solid rgba(0,0,0,.22);border-radius:4px;background:#fff;background-clip:padding-box"></div>
<div style="position:absolute;left:12px;top:42px;width:30px;height:1px;background:#ccc"></div>
<span class="t" style="left:20.500px;top:16px;font-size:24px;font-weight:700;color:#000">+</span>
<span class="t" style="left:20.700px;top:46px;font-size:24px;font-weight:700;color:#000">−</span>
<!-- attribution -->
<div style="position:absolute;left:4px;top:425px;width:406px;height:16px;background:rgba(255,255,255,.72)"></div>
<span class="t" style="left:9.200px;top:427.300px;font-size:11px;color:#333;letter-spacing:0"><span style="color:#0078a8;border-bottom:1px solid #b9d7e6">Leaflet</span> | © <span style="color:#0078a8;border-bottom:1px solid #b9d7e6">OpenStreetMap</span>, Tiles courtesy of <span style="color:#0078a8;border-bottom:1px solid #b9d7e6">Humanitarian OpenStreetMap Team</span></span>

</div></div>
<div id="winfo" class="w"><span class="t" style="top:30.00px;font-size:20px;left:91.80px;font-weight:700;color:#8c8c8c;letter-spacing:-0.421px;">VILLEBON-SUR-YVETTE (F466000101)</span>
<span class="t" style="top:75.00px;font-size:18px;left:92.00px;color:#858585;letter-spacing:-0.433px;">Commune : 91661</span>
<span class="t" style="top:103.00px;font-size:18px;left:92.00px;color:#858585;letter-spacing:-0.491px;">Cours d&#x27;eau : Yvette</span>
<span class="t" style="top:131.00px;font-size:18px;left:92.00px;color:#858585;letter-spacing:-0.420px;">Coordonnées (L93) X=643626.00 - Y=6844832.00</span>
<span class="t" style="top:159.00px;font-size:18px;left:92.00px;color:#1565c0;letter-spacing:0.026px;">Fiche station</span>
<span class="t" style="top:187.00px;font-size:18px;left:92.00px;color:#1565c0;letter-spacing:-0.116px;">Synthèse hydrologique</span>
<div class="abs" style="left:92px;top:178px;width:103px;height:1px;background:#b9cdea"></div>
<div class="abs" style="left:92px;top:206px;width:181px;height:1px;background:#b9cdea"></div>
<div class="abs" style="left:618px;top:0;width:300px;height:230px;overflow:hidden"><svg style="left:0;top:0" width="300" height="230" viewBox="0 0 300 230">
<defs>
<filter id="pb" x="-5%" y="-5%" width="110%" height="110%"><feGaussianBlur stdDeviation="0.800"/></filter>
<filter id="leaf" x="0" y="0" width="100%" height="100%" color-interpolation-filters="sRGB">
<feTurbulence type="fractalNoise" baseFrequency="0.130 0.160" numOctaves="3" seed="7" result="n"/>
<feColorMatrix in="n" type="matrix" values="0 0 0 0 0.560  0 0 0 0 0.820  0 0 0 0 0.400  2.800 2.800 0 0 -2.850" result="c"/>
<feComposite in="c" in2="SourceGraphic" operator="in"/>
</filter>
<filter id="leafd" x="0" y="0" width="100%" height="100%" color-interpolation-filters="sRGB">
<feTurbulence type="fractalNoise" baseFrequency="0.130 0.160" numOctaves="3" seed="7" result="n"/>
<feColorMatrix in="n" type="matrix" values="0 0 0 0 0.120  0 0 0 0 0.300  0 0 0 0 0.110  -3.200 -3.200 0 0 3.300" result="c"/>
<feComposite in="c" in2="SourceGraphic" operator="in"/>
</filter>
<linearGradient id="wg" x1="0" y1="0" x2="0" y2="1"><stop offset="0" stop-color="#3f402c"/><stop offset=".3" stop-color="#5d5b45"/><stop offset="1" stop-color="#7b7662"/></linearGradient>
<linearGradient id="rg" x1="0" y1="0" x2="1" y2="0"><stop offset="0" stop-color="#adb8bd"/><stop offset=".5" stop-color="#95a4ac"/><stop offset="1" stop-color="#b4bec4"/></linearGradient>
<linearGradient id="bg2" x1="0" y1="0" x2="0" y2="1"><stop offset="0" stop-color="#0c2a0c" stop-opacity="0"/><stop offset=".5" stop-color="#0c2a0c" stop-opacity=".08"/><stop offset="1" stop-color="#0c2a0c" stop-opacity=".42"/></linearGradient>
</defs>
<rect width="300" height="230" fill="#6d6a58"/>
<g filter="url(#pb)">
<!-- grass -->
<path d="M150 0H206L198 86H128Z" fill="#84b24e"/>
<path d="M160 0H200V8H160Z" fill="#9acb64"/>
<!-- road behind railing -->
<rect x="236" y="5" width="64" height="93" fill="#b1b1b6"/>
<path d="M241 11L300 50V55L241 14Z" fill="#e4e4e4"/>
<rect x="236" y="97" width="64" height="56" fill="#77756f"/>
<path d="M236 97H300V104H236Z" fill="#97958f"/>
<!-- water -->
<rect x="0" y="140" width="208" height="90" fill="url(#wg)"/>
<path d="M138 206L158 208 198 214V230H150Z" fill="#a3a7ad" opacity=".850"/>
<path d="M140 202q8 6 6 14t8 14h-18q2-14-2-20z" fill="#4d4c3b" opacity=".700"/>
<rect x="167" y="205" width="2" height="25" fill="#4d4c3b" opacity=".700"/>
<rect x="196" y="150" width="6" height="72" fill="#55533f" opacity=".600"/>
<!-- culvert -->
<path d="M128 85H198V92H128Z" fill="#787260"/>
<rect x="129" y="91" width="41" height="56" fill="#3a332b"/>
<path d="M129 100Q150 104 150 128T129 146Z" fill="#6c5d50"/>
<path d="M140 146L152 128 169 134V147Z" fill="#5f5347"/>
<rect x="169" y="89" width="29" height="59" fill="#7d7b67"/>
<rect x="176" y="92" width="20" height="32" fill="#86846f"/>
<rect x="178" y="128" width="19" height="20" fill="#6b6a57"/>
<path d="M148 122Q158 116 168 124T170 150 152 154 148 140Z" fill="#3b7434"/>
<!-- top objects -->
<rect x="165" y="0" width="15" height="19" fill="#1f5d45"/>
<rect x="174" y="4" width="30" height="17" fill="#4f7048"/>
<rect x="176" y="6" width="26" height="8" fill="#7f9a7c"/>
<rect x="173" y="22" width="28" height="4" fill="#b3a88f"/>
<rect x="188" y="0" width="2" height="21" fill="#d9d9d9"/>
<!-- gauge -->
<rect x="202" y="36" width="4" height="44" fill="#4a4a46"/>
<rect x="172" y="42" width="32" height="4.500" fill="#d2d2d0"/>
<path d="M197 42L204 34V42Z" fill="#bfbfbb"/>
<rect x="173" y="47.500" width="7" height="10" fill="#e8ecf5"/><rect x="174" y="51" width="5" height="4" fill="#4f66a8"/>
<rect x="197.500" y="78" width="6.500" height="74" fill="#c7c8c2"/>
<rect x="203" y="62" width="3" height="90" fill="#55544a"/>
<!-- parapet -->
<path d="M204 0H212L226 158 246 165 258 230H208L205 85Z" fill="#98968a"/>
<path d="M204 0H209L218 230H206Z" fill="#6d6c5f"/>
<path d="M246 165H300V230H258Z" fill="#8c8a7d"/>
<path d="M255 190Q270 180 300 186V230H262Z" fill="#817d62"/>
<path d="M262 200Q275 186 285 196T300 196V230H264Z" fill="#a39a5e"/>
<!-- railing -->
<rect x="210" y="0" width="29" height="158" fill="url(#rg)"/>
<rect x="215" y="0" width="3" height="150" fill="#c3ced4"/><rect x="224" y="0" width="2.500" height="158" fill="#7e929d"/>
<rect x="222" y="0" width="78" height="6.500" fill="#5e7a68"/>
<rect x="222" y="5.500" width="78" height="1.500" fill="#3e5446"/>
<rect x="259" y="6.500" width="5.500" height="146" fill="#a3b1b9"/>
<rect x="281.500" y="6.500" width="6.500" height="146" fill="#a3b1b9"/>
<rect x="228" y="151" width="72" height="11" fill="#b6c2ca"/>
<rect x="228" y="160.500" width="72" height="2" fill="#75838b"/>
</g>
<!-- bush -->
<g filter="url(#pb)">
<path id="bush" d="M0 0H166L170 22 162 45 166 62 152 78 132 86 128 100 146 112 144 126 122 136 116 152 86 162 66 151 42 150 16 157 0 142Z" fill="#4a8f3c"/>
</g>
<path d="M0 0H166L170 22 162 45 166 62 152 78 132 86 128 100 146 112 144 126 122 136 116 152 86 162 66 151 42 150 16 157 0 142Z" fill="#000" filter="url(#leafd)"/>
<path d="M0 0H166L170 22 162 45 166 62 152 78 132 86 128 100 146 112 144 126 122 136 116 152 86 162 66 151 42 150 16 157 0 142Z" fill="#000" filter="url(#leaf)"/>
<path d="M0 0H166L170 22 162 45 166 62 152 78 132 86 128 100 146 112 144 126 122 136 116 152 86 162 66 151 42 150 16 157 0 142Z" fill="url(#bg2)"/>
<path d="M148 122Q158 116 168 124T170 150 152 154 148 140Z" fill="#000" filter="url(#leafd)"/><path d="M148 122Q158 116 168 124T170 150 152 154 148 140Z" fill="#000" filter="url(#leaf)" opacity=".700"/>
</svg>
</div></div>
<div id="wseuil" class="w"><span class="t" style="top:10.00px;font-size:14px;left:5.20px;letter-spacing:0.126px;">Seuils historiques</span>
<div class="abs" style="left:13px;top:43px;width:429px;height:179px;background:#fff;box-shadow:0 0 6px rgba(0,0,0,.2),0 0 1px rgba(0,0,0,.12)"></div>
<span class="t" style="top:45.00px;font-size:16px;left:31.50px;color:#757575;letter-spacing:-0.036px;">Nom seuil historique 1</span>
<span class="t" style="top:45.00px;font-size:16px;left:249.30px;color:#757575;letter-spacing:0.141px;">Crue du 01/06/2016</span>
<span class="t" style="top:65.00px;font-size:16px;left:31.50px;color:#757575;letter-spacing:-0.055px;">Hauteur seuil historique 1</span>
<span class="t" style="top:65.00px;font-size:16px;left:249.30px;color:#757575;letter-spacing:-0.035px;">3.05</span>
<div class="ln" style="left:13px;top:62px;width:429px;background:#dcdcdc"></div>
<span class="t" style="top:85.00px;font-size:16px;left:31.50px;color:#757575;letter-spacing:-0.082px;">Débit seuil hitorique 1</span>
<span class="t" style="top:85.00px;font-size:16px;left:249.30px;color:#757575;letter-spacing:-0.110px;">25.4</span>
<div class="ln" style="left:13px;top:82px;width:429px;background:#dcdcdc"></div>
<span class="t" style="top:105.00px;font-size:16px;left:31.50px;color:#757575;letter-spacing:0.032px;">Nom seuil historique 2</span>
<span class="t" style="top:105.00px;font-size:16px;left:249.30px;color:#757575;letter-spacing:0.141px;">Crue du 28/12/1999</span>
<div class="ln" style="left:13px;top:102px;width:429px;background:#dcdcdc"></div>
<span class="t" style="top:125.00px;font-size:16px;left:31.50px;color:#757575;letter-spacing:0.002px;">Hauteur seuil historique 2</span>
<span class="t" style="top:125.00px;font-size:16px;left:249.30px;color:#757575;letter-spacing:-0.035px;">2.33</span>
<div class="ln" style="left:13px;top:122px;width:429px;background:#dcdcdc"></div>
<span class="t" style="top:145.00px;font-size:16px;left:31.50px;color:#757575;letter-spacing:-0.036px;">Débit seuil historique 2</span>
<span class="t" style="top:145.00px;font-size:16px;left:249.30px;color:#757575;letter-spacing:-0.035px;">18.3</span>
<div class="ln" style="left:13px;top:142px;width:429px;background:#dcdcdc"></div>
<span class="t" style="top:165.00px;font-size:16px;left:31.50px;color:#757575;letter-spacing:0.032px;">Nom seuil historique 3</span>
<div class="ln" style="left:13px;top:162px;width:429px;background:#dcdcdc"></div>
<span class="t" style="top:185.00px;font-size:16px;left:31.50px;color:#757575;letter-spacing:0.002px;">Hauteur seuil historique 3</span>
<div class="ln" style="left:13px;top:182px;width:429px;background:#dcdcdc"></div>
<span class="t" style="top:205.00px;font-size:16px;left:31.50px;color:#757575;letter-spacing:-0.036px;">Débit seuil historique 3</span>
<div class="ln" style="left:13px;top:202px;width:429px;background:#dcdcdc"></div>
<div class="abs" style="left:455px;top:29px;width:15px;height:201px;background:#f1f1f1"></div>
<div class="abs" style="left:457px;top:44px;width:11px;height:166px;background:#c1c1c1"></div>
<svg style="left:455px;top:29px" width="15" height="201" viewBox="0 0 15 201"><path d="M3.900 10.200h7L7.400 5.800z" fill="#a3a3a3"/><path d="M3.900 191h7L7.400 195.400z" fill="#505050"/></svg></div>
<div id="walarm" class="w"><span class="t" style="top:12.00px;font-size:19px;left:15.50px;letter-spacing:-0.413px;">Alarmes</span>
<svg style="left:0;top:0" width="530" height="230" viewBox="910 340 530 230"><circle cx="1414" cy="362.900" r="4.600" fill="none" stroke="#212121" stroke-width="1.800"/><path d="M1417.300 366.200l5 5" stroke="#212121" stroke-width="2.100"/><path d="M1043 400v13.500M1036.500 407.500l6.500 6.500 6.500-6.500" fill="none" stroke="#212121" stroke-width="1.700"/></svg>
<div class="cb" style="left:12px;top:57px"></div>
<div class="cb" style="left:12px;top:109px"></div>
<span class="t" style="top:61.00px;font-size:12px;left:44.20px;font-weight:700;letter-spacing:-0.309px;">Created time</span>
<span class="t" style="top:61.00px;font-size:12px;left:158.10px;font-weight:700;color:#757575;letter-spacing:-0.281px;">Type</span>
<span class="t" style="top:61.00px;font-size:12px;left:244.80px;font-weight:700;color:#757575;letter-spacing:-0.338px;">Severity</span>
<span class="t" style="top:61.00px;font-size:12px;left:358.90px;font-weight:700;color:#757575;letter-spacing:-0.365px;">Status</span>
<span class="t" style="top:61.00px;font-size:12px;left:487.00px;font-weight:700;color:#757575;letter-spacing:-0.280px;">Heure de fin</span>
<div class="ln" style="left:0;top:95px;width:530px;background:#dedede"></div>
<div class="ln" style="left:0;top:143px;width:530px;background:#dedede"></div>
<span class="t" style="top:105.00px;font-size:13px;left:44.20px;letter-spacing:-0.150px;">2018-06-13</span>
<span class="t" style="top:120.00px;font-size:13px;left:44.20px;letter-spacing:-0.176px;">00:30:23</span>
<span class="t" style="top:113.00px;font-size:13px;left:158.10px;letter-spacing:-0.138px;">Hydro</span>
<span class="t" style="top:113.00px;font-size:13px;left:244.80px;font-weight:700;color:#b3b300;letter-spacing:-0.279px;">Avertissement</span>
<span class="t" style="top:105.00px;font-size:13px;left:358.90px;letter-spacing:-0.219px;">Cleared</span>
<span class="t" style="top:120.00px;font-size:13px;left:358.90px;letter-spacing:-0.052px;">Unacknowledged</span>
<span class="t" style="top:113.00px;font-size:13px;left:487.00px;letter-spacing:-0.143px;">1970-01-01 01:00:00</span>
<div class="abs" style="left:0;top:215px;width:530px;height:15px;background:#f1f1f1"></div>
<div class="abs" style="left:15px;top:217px;width:326px;height:11px;background:#c1c1c1"></div>
<svg style="left:0;top:215px" width="530" height="15" viewBox="0 0 530 15"><path d="M9.400 4v7L5 7.500z" fill="#a3a3a3"/><path d="M519.600 4v7l4.400-3.500z" fill="#505050"/></svg></div>
<div id="wchart" class="w"><svg style="left:0;top:0" width="710" height="410" viewBox="10 580 710 410">
<rect x="132.9" y="627" width="1" height="278" fill="#dddddd"/>
<rect x="194.2" y="627" width="1" height="278" fill="#dddddd"/>
<rect x="255.5" y="627" width="1" height="278" fill="#dddddd"/>
<rect x="316.8" y="627" width="1" height="278" fill="#dddddd"/>
<rect x="378.1" y="627" width="1" height="278" fill="#dddddd"/>
<rect x="439.4" y="627" width="1" height="278" fill="#dddddd"/>
<rect x="500.7" y="627" width="1" height="278" fill="#dddddd"/>
<rect x="562.0" y="627" width="1" height="278" fill="#dddddd"/>
<rect x="623.3" y="627" width="1" height="278" fill="#dddddd"/>
<rect x="684.6" y="627" width="1" height="278" fill="#dddddd"/>
<rect x="88" y="719.0" width="614" height="1" fill="#dddddd"/>
<rect x="88" y="811.7" width="614" height="1" fill="#dddddd"/>
<rect x="57" y="627" width="1" height="278.500" fill="#dddddd"/>
<rect x="52.500" y="626.8" width="5" height="1" fill="#dddddd"/>
<rect x="52.500" y="682.3" width="5" height="1" fill="#dddddd"/>
<rect x="52.500" y="737.9" width="5" height="1" fill="#dddddd"/>
<rect x="52.500" y="793.0" width="5" height="1" fill="#dddddd"/>
<rect x="52.500" y="848.6" width="5" height="1" fill="#dddddd"/>
<rect x="52.500" y="904.5" width="5" height="1" fill="#dddddd"/>
<polyline points="88.9,877.1 92.7,878.2 100.4,878.4 108.2,876.9 113.7,877.7 122.5,878.5 126.9,877.3 128.6,834.1 130.2,817.6 131.3,818.7 133,845.1 134.6,866.1 137.9,871 141.2,872.9 149,872.9 155.6,874.9 164.4,877.1 171,875.8 182,876.9 184,871 185.6,881 189.2,872.1 190.9,845.1 192.5,814.3 193.6,814 195.8,819.8 197.5,831.9 200.2,847.3 201.9,850.4 204.1,850.1 209.6,856.2 217.3,866.1 222.8,872.1 227.2,871.4 232.2,874.4 233.3,863.3 235.5,863.9 237.7,861.7 241.6,869.4 245.5,874.4 246.8,869.4 248.3,872.5 249.9,872.1 253.2,874.4 254.9,860.6 256,858.6 257.6,865 260.4,865.2 263.2,868.8 268.1,868.1 272.5,868.8 273.3,837.4 274.4,836.1 275.8,840.7 277.5,858.4 279.9,862.8 284.7,855.9 287.4,856.7 290.2,856.7 292.4,862.8 296.2,865 302.9,869.4 309.5,873.2 310.8,868.5 312.2,874.4 314.4,867.7 315.9,863.7 317.7,872.7 326,873.8 331,872.1 333.7,872.7 339.8,872.7 343.1,870.3 346.4,873.2 348.6,871.4 353.6,873.8 361.3,874.7 367.9,875.8 371.2,874.4 377.8,875.5 379.5,868.5 381.7,875.5 383.3,875.5 384.7,868.5 387.8,870.3 392.7,872.1 393.6,834.1 394.4,817.6 395.7,817.6 396.8,828.6 399.4,836.3 404.3,856.2 405.4,855.6 407.6,834.1 408.7,811 410.1,810.7 412.1,816.5 413.7,823.6 416.5,824.4 420.3,829.7 422,834.1 423.4,838 425.3,827.5 426.6,826.9 429.1,836.3 430.8,838.5 434.1,832.5 436.3,831.9 438.5,837.4 442.9,850.6 448.4,857.5 452.3,859.2 455.1,863.9 461.7,869.4 467.2,871.6 471,874.4 473.8,872.1 483.7,875.5 492.5,877.7 496.4,874.9 500.3,877.7 504.7,878.8 512.4,878.8 515.7,877.7 516.8,834.1 518,765 519.5,752 521,765 523.5,808.2 526.5,836.2 529.4,838.4 532.4,845 536.5,848.7 538.6,812 539.5,780 541,748 545.5,714 547.5,699 549.2,690.9 551,697 553.1,711.5 556,705 559.5,700.9 562,702 564,712 567.5,730 571.1,750.1 573.2,770 575.7,775.1 580.9,781.6 584.8,791.9 592.5,807.3 600.2,820.2 604.1,830.5 605.6,839.5 610.5,844 613.1,844.4 614.4,840.2 615.9,840.5 618.2,844.7 620.5,846.2 623.4,851.7 629.8,854.3 634.3,855.6 636.9,854.6 641.4,857.8 644.6,858.2 651.7,862.7 658.1,862.9 660.7,865.2 665.8,865.9 671.6,870.4 675.5,873 677.4,876.2 680,871.7 682.6,870.4 686.4,873.6" fill="none" stroke="rgba(0,0,0,0.15)" stroke-width="3" transform="translate(0.500,2.800)" stroke-linejoin="round"/>
<polyline points="88.9,897.5 100.4,898.9 109.3,897.5 122.5,899.2 126.9,898.1 128.2,867.2 129.7,843.5 131.1,844 132.4,867.2 134.6,890.3 139,894.8 149,896.1 164.4,898.1 165.5,893.6 182,894.2 184.2,889.8 185.6,897 187.5,893.6 190.3,893.1 191.4,856.2 192.5,831.9 194.2,832.5 196.1,838.5 198.6,858.4 200.8,871.6 206.3,874.9 215.1,885.9 222.8,891.7 227.2,891.2 232.2,892.5 233.3,885.9 235.5,886.5 237.7,883.7 241.6,889.2 245.5,892.5 246.8,889.8 248.3,892 253.2,893.1 254.9,882.6 256,880.6 257.6,886.5 263.2,889 268.1,888.1 272.5,888.7 273.4,860.6 275.1,860.6 277.5,880.4 279.9,884.8 284.7,878.8 287.4,878.2 290.2,879.9 292.4,884.8 296.2,886.5 302.9,889.8 309.5,892 310.8,889.2 313.3,893.7 315,887 315.9,886.2 317.7,892 326,892.5 339.8,892 343.1,890.3 346.4,891.7 348.6,890.9 361.3,893.1 367.9,893.9 371.2,892.8 377.8,893.7 379.5,889.2 381.7,893.7 383.3,893.7 385.3,889.2 392.7,890.9 393.6,856.2 394.4,837.4 395.7,837.4 396.8,848.4 401,867.2 404.3,878.2 405.7,877.1 407.6,861.7 409,828.6 410.4,827.5 412.1,838.5 413.7,844 417,845.7 420.3,851.7 422,856.2 423.4,860 425.3,848.4 426.6,847.9 429.1,857.3 431.3,860.6 434.1,854 436.3,852.9 438.5,860.6 442.9,873.8 448.4,882.1 452.3,881.3 455.6,887 461.7,889.8 467.2,891.4 471.6,893.7 473.8,891.4 483.7,893.7 492.5,894.8 496.4,893.1 500.3,894.5 509.1,896.1 516.8,895.3 517.7,834.1 518.3,760 519.5,740.4 520.8,760 522.1,793.5 525.7,845 527.2,859.7 530.1,861.2 533.1,867.8 536,870.7 537.9,852.4 539,793.5 539.7,764 540.8,720.5 545.3,692 547.3,679.3 549.2,675.4 551.1,681.9 553.1,702.5 555.6,694.8 558.9,689 562.1,690.2 564.5,710 567.2,737.2 571.3,753.8 572.5,770 574.5,782.9 580.9,794.5 584.1,805.4 592.5,824.1 600.8,840.8 604.1,852.4 605.6,861.4 610.5,866.5 612.8,867.2 614.1,862.7 615.9,862.7 620.2,870.4 624.7,874.5 629.8,876.6 636.9,877.5 645.2,880.7 653,885.6 658.1,885.8 665.8,887.8 671.6,891 674.2,893.6 675.5,891.6 677.4,894.2 681.3,890.3 686.4,892.3" fill="none" stroke="rgba(0,0,0,0.15)" stroke-width="3" transform="translate(0.500,2.800)" stroke-linejoin="round"/>
<clipPath id="pc"><rect x="88" y="627" width="614" height="278"/></clipPath><g clip-path="url(#pc)">
<polyline points="88.9,877.1 92.7,878.2 100.4,878.4 108.2,876.9 113.7,877.7 122.5,878.5 126.9,877.3 128.6,834.1 130.2,817.6 131.3,818.7 133,845.1 134.6,866.1 137.9,871 141.2,872.9 149,872.9 155.6,874.9 164.4,877.1 171,875.8 182,876.9 184,871 185.6,881 189.2,872.1 190.9,845.1 192.5,814.3 193.6,814 195.8,819.8 197.5,831.9 200.2,847.3 201.9,850.4 204.1,850.1 209.6,856.2 217.3,866.1 222.8,872.1 227.2,871.4 232.2,874.4 233.3,863.3 235.5,863.9 237.7,861.7 241.6,869.4 245.5,874.4 246.8,869.4 248.3,872.5 249.9,872.1 253.2,874.4 254.9,860.6 256,858.6 257.6,865 260.4,865.2 263.2,868.8 268.1,868.1 272.5,868.8 273.3,837.4 274.4,836.1 275.8,840.7 277.5,858.4 279.9,862.8 284.7,855.9 287.4,856.7 290.2,856.7 292.4,862.8 296.2,865 302.9,869.4 309.5,873.2 310.8,868.5 312.2,874.4 314.4,867.7 315.9,863.7 317.7,872.7 326,873.8 331,872.1 333.7,872.7 339.8,872.7 343.1,870.3 346.4,873.2 348.6,871.4 353.6,873.8 361.3,874.7 367.9,875.8 371.2,874.4 377.8,875.5 379.5,868.5 381.7,875.5 383.3,875.5 384.7,868.5 387.8,870.3 392.7,872.1 393.6,834.1 394.4,817.6 395.7,817.6 396.8,828.6 399.4,836.3 404.3,856.2 405.4,855.6 407.6,834.1 408.7,811 410.1,810.7 412.1,816.5 413.7,823.6 416.5,824.4 420.3,829.7 422,834.1 423.4,838 425.3,827.5 426.6,826.9 429.1,836.3 430.8,838.5 434.1,832.5 436.3,831.9 438.5,837.4 442.9,850.6 448.4,857.5 452.3,859.2 455.1,863.9 461.7,869.4 467.2,871.6 471,874.4 473.8,872.1 483.7,875.5 492.5,877.7 496.4,874.9 500.3,877.7 504.7,878.8 512.4,878.8 515.7,877.7 516.8,834.1 518,765 519.5,752 521,765 523.5,808.2 526.5,836.2 529.4,838.4 532.4,845 536.5,848.7 538.6,812 539.5,780 541,748 545.5,714 547.5,699 549.2,690.9 551,697 553.1,711.5 556,705 559.5,700.9 562,702 564,712 567.5,730 571.1,750.1 573.2,770 575.7,775.1 580.9,781.6 584.8,791.9 592.5,807.3 600.2,820.2 604.1,830.5 605.6,839.5 610.5,844 613.1,844.4 614.4,840.2 615.9,840.5 618.2,844.7 620.5,846.2 623.4,851.7 629.8,854.3 634.3,855.6 636.9,854.6 641.4,857.8 644.6,858.2 651.7,862.7 658.1,862.9 660.7,865.2 665.8,865.9 671.6,870.4 675.5,873 677.4,876.2 680,871.7 682.6,870.4 686.4,873.6" fill="none" stroke="#2196f3" stroke-width="2.450" stroke-linejoin="round"/>
<polygon points="88.900,905 88.9,897.5 100.4,898.9 109.3,897.5 122.5,899.2 126.9,898.1 128.2,867.2 129.7,843.5 131.1,844 132.4,867.2 134.6,890.3 139,894.8 149,896.1 164.4,898.1 165.5,893.6 182,894.2 184.2,889.8 185.6,897 187.5,893.6 190.3,893.1 191.4,856.2 192.5,831.9 194.2,832.5 196.1,838.5 198.6,858.4 200.8,871.6 206.3,874.9 215.1,885.9 222.8,891.7 227.2,891.2 232.2,892.5 233.3,885.9 235.5,886.5 237.7,883.7 241.6,889.2 245.5,892.5 246.8,889.8 248.3,892 253.2,893.1 254.9,882.6 256,880.6 257.6,886.5 263.2,889 268.1,888.1 272.5,888.7 273.4,860.6 275.1,860.6 277.5,880.4 279.9,884.8 284.7,878.8 287.4,878.2 290.2,879.9 292.4,884.8 296.2,886.5 302.9,889.8 309.5,892 310.8,889.2 313.3,893.7 315,887 315.9,886.2 317.7,892 326,892.5 339.8,892 343.1,890.3 346.4,891.7 348.6,890.9 361.3,893.1 367.9,893.9 371.2,892.8 377.8,893.7 379.5,889.2 381.7,893.7 383.3,893.7 385.3,889.2 392.7,890.9 393.6,856.2 394.4,837.4 395.7,837.4 396.8,848.4 401,867.2 404.3,878.2 405.7,877.1 407.6,861.7 409,828.6 410.4,827.5 412.1,838.5 413.7,844 417,845.7 420.3,851.7 422,856.2 423.4,860 425.3,848.4 426.6,847.9 429.1,857.3 431.3,860.6 434.1,854 436.3,852.9 438.5,860.6 442.9,873.8 448.4,882.1 452.3,881.3 455.6,887 461.7,889.8 467.2,891.4 471.6,893.7 473.8,891.4 483.7,893.7 492.5,894.8 496.4,893.1 500.3,894.5 509.1,896.1 516.8,895.3 517.7,834.1 518.3,760 519.5,740.4 520.8,760 522.1,793.5 525.7,845 527.2,859.7 530.1,861.2 533.1,867.8 536,870.7 537.9,852.4 539,793.5 539.7,764 540.8,720.5 545.3,692 547.3,679.3 549.2,675.4 551.1,681.9 553.1,702.5 555.6,694.8 558.9,689 562.1,690.2 564.5,710 567.2,737.2 571.3,753.8 572.5,770 574.5,782.9 580.9,794.5 584.1,805.4 592.5,824.1 600.8,840.8 604.1,852.4 605.6,861.4 610.5,866.5 612.8,867.2 614.1,862.7 615.9,862.7 620.2,870.4 624.7,874.5 629.8,876.6 636.9,877.5 645.2,880.7 653,885.6 658.1,885.8 665.8,887.8 671.6,891 674.2,893.6 675.5,891.6 677.4,894.2 681.3,890.3 686.4,892.3 686.400,905" fill="rgba(76,175,80,0.400)"/>
<polyline points="88.9,897.5 100.4,898.9 109.3,897.5 122.5,899.2 126.9,898.1 128.2,867.2 129.7,843.5 131.1,844 132.4,867.2 134.6,890.3 139,894.8 149,896.1 164.4,898.1 165.5,893.6 182,894.2 184.2,889.8 185.6,897 187.5,893.6 190.3,893.1 191.4,856.2 192.5,831.9 194.2,832.5 196.1,838.5 198.6,858.4 200.8,871.6 206.3,874.9 215.1,885.9 222.8,891.7 227.2,891.2 232.2,892.5 233.3,885.9 235.5,886.5 237.7,883.7 241.6,889.2 245.5,892.5 246.8,889.8 248.3,892 253.2,893.1 254.9,882.6 256,880.6 257.6,886.5 263.2,889 268.1,888.1 272.5,888.7 273.4,860.6 275.1,860.6 277.5,880.4 279.9,884.8 284.7,878.8 287.4,878.2 290.2,879.9 292.4,884.8 296.2,886.5 302.9,889.8 309.5,892 310.8,889.2 313.3,893.7 315,887 315.9,886.2 317.7,892 326,892.5 339.8,892 343.1,890.3 346.4,891.7 348.6,890.9 361.3,893.1 367.9,893.9 371.2,892.8 377.8,893.7 379.5,889.2 381.7,893.7 383.3,893.7 385.3,889.2 392.7,890.9 393.6,856.2 394.4,837.4 395.7,837.4 396.8,848.4 401,867.2 404.3,878.2 405.7,877.1 407.6,861.7 409,828.6 410.4,827.5 412.1,838.5 413.7,844 417,845.7 420.3,851.7 422,856.2 423.4,860 425.3,848.4 426.6,847.9 429.1,857.3 431.3,860.6 434.1,854 436.3,852.9 438.5,860.6 442.9,873.8 448.4,882.1 452.3,881.3 455.6,887 461.7,889.8 467.2,891.4 471.6,893.7 473.8,891.4 483.7,893.7 492.5,894.8 496.4,893.1 500.3,894.5 509.1,896.1 516.8,895.3 517.7,834.1 518.3,760 519.5,740.4 520.8,760 522.1,793.5 525.7,845 527.2,859.7 530.1,861.2 533.1,867.8 536,870.7 537.9,852.4 539,793.5 539.7,764 540.8,720.5 545.3,692 547.3,679.3 549.2,675.4 551.1,681.9 553.1,702.5 555.6,694.8 558.9,689 562.1,690.2 564.5,710 567.2,737.2 571.3,753.8 572.5,770 574.5,782.9 580.9,794.5 584.1,805.4 592.5,824.1 600.8,840.8 604.1,852.4 605.6,861.4 610.5,866.5 612.8,867.2 614.1,862.7 615.9,862.7 620.2,870.4 624.7,874.5 629.8,876.6 636.9,877.5 645.2,880.7 653,885.6 658.1,885.8 665.8,887.8 671.6,891 674.2,893.6 675.5,891.6 677.4,894.2 681.3,890.3 686.4,892.3" fill="none" stroke="#4caf50" stroke-width="2.450" stroke-linejoin="round"/>
</g>
<rect x="423" y="627" width="1" height="278" fill="#aa2222"/>
<circle cx="423.400" cy="838.300" r="6.800" fill="rgba(33,150,243,0.750)"/>
<circle cx="423.400" cy="860.100" r="6.800" fill="rgba(76,175,80,0.800)"/>
<rect x="87.700" y="626.800" width="614.900" height="278.500" fill="none" stroke="#3d3d3d" stroke-width="1.250"/>
<rect x="13" y="957.700" width="15.300" height="3" fill="#2196f3"/><rect x="13" y="977.700" width="15.300" height="3" fill="#4caf50"/>
<path d="M691 603.500v-3.500h3.500M698.500 600h3.500v3.500M702 607.500v3.500h-3.500M694.500 611h-3.500v-3.500" fill="none" stroke="#212121" stroke-width="1.800"/>
</svg>
<span class="t" style="top:9.00px;font-size:16px;left:5.50px;letter-spacing:0.159px;">Hauteur / Débit</span>
<span class="t" style="top:44.00px;font-size:10px;left:1.20px;color:#545454;letter-spacing:0.219px;">25 m<sup style="font-size:8px;line-height:0;vertical-align:4.200px">3</sup>/s</span>
<span class="t" style="top:100.00px;font-size:10px;left:1.20px;color:#545454;letter-spacing:0.219px;">20 m<sup style="font-size:8px;line-height:0;vertical-align:4.200px">3</sup>/s</span>
<span class="t" style="top:155.00px;font-size:10px;left:1.20px;color:#545454;letter-spacing:0.219px;">15 m<sup style="font-size:8px;line-height:0;vertical-align:4.200px">3</sup>/s</span>
<span class="t" style="top:210.00px;font-size:10px;left:1.20px;color:#545454;letter-spacing:0.219px;">10 m<sup style="font-size:8px;line-height:0;vertical-align:4.200px">3</sup>/s</span>
<span class="t" style="top:266.00px;font-size:10px;left:6.70px;color:#545454;letter-spacing:0.266px;">5 m<sup style="font-size:8px;line-height:0;vertical-align:4.200px">3</sup>/s</span>
<span class="t" style="top:322.00px;font-size:10px;left:6.70px;color:#545454;letter-spacing:0.266px;">0 m<sup style="font-size:8px;line-height:0;vertical-align:4.200px">3</sup>/s</span>
<span class="t" style="top:42.00px;font-size:10px;left:55.40px;color:#545454;letter-spacing:-0.291px;">3 m</span>
<span class="t" style="top:134.00px;font-size:10px;left:55.40px;color:#545454;letter-spacing:-0.291px;">2 m</span>
<span class="t" style="top:227.00px;font-size:10px;left:55.40px;color:#545454;letter-spacing:-0.291px;">1 m</span>
<span class="t" style="top:320.00px;font-size:10px;left:55.40px;color:#545454;letter-spacing:-0.291px;">0 m</span>
<span class="t" style="top:330.00px;font-size:10px;left:107.40px;color:#545454;letter-spacing:-0.133px;">May 23</span>
<span class="t" style="top:330.00px;font-size:10px;left:168.70px;color:#545454;letter-spacing:-0.133px;">May 26</span>
<span class="t" style="top:330.00px;font-size:10px;left:230.00px;color:#545454;letter-spacing:-0.133px;">May 29</span>
<span class="t" style="top:330.00px;font-size:10px;left:292.30px;color:#545454;letter-spacing:-0.005px;">Jun 01</span>
<span class="t" style="top:330.00px;font-size:10px;left:353.60px;color:#545454;letter-spacing:-0.005px;">Jun 04</span>
<span class="t" style="top:330.00px;font-size:10px;left:414.90px;color:#545454;letter-spacing:-0.005px;">Jun 07</span>
<span class="t" style="top:330.00px;font-size:10px;left:476.20px;color:#545454;letter-spacing:-0.005px;">Jun 10</span>
<span class="t" style="top:330.00px;font-size:10px;left:537.50px;color:#545454;letter-spacing:-0.005px;">Jun 13</span>
<span class="t" style="top:330.00px;font-size:10px;left:598.80px;color:#545454;letter-spacing:-0.005px;">Jun 16</span>
<span class="t" style="top:330.00px;font-size:10px;left:660.10px;color:#545454;letter-spacing:-0.005px;">Jun 19</span>
<span class="t" style="top:373.00px;font-size:12px;left:31.60px;letter-spacing:-0.172px;">Hauteur</span>
<span class="t" style="top:393.00px;font-size:12px;left:31.60px;letter-spacing:-0.203px;">Débit</span>
<span class="t" style="top:354.00px;font-size:12px;left:518.75px;font-weight:700;color:#ff6a3c;letter-spacing:-0.448px;">min</span>
<span class="t" style="top:354.00px;font-size:12px;left:675.00px;font-weight:700;color:#ff6a3c;letter-spacing:-0.444px;">max</span>
<span class="t" style="top:373.00px;font-size:12px;left:503.10px;letter-spacing:-0.181px;">0.26 m</span>
<span class="t" style="top:373.00px;font-size:12px;left:661.30px;letter-spacing:-0.048px;">2.31 m</span>
<span class="t" style="top:393.00px;font-size:12px;left:409.80px;letter-spacing:-0.225px;">0.52 m&lt;SUP&gt;3&lt;/SUP&gt;/s</span>
<span class="t" style="top:393.00px;font-size:12px;left:562.10px;letter-spacing:-0.214px;">20.59 m&lt;SUP&gt;3&lt;/SUP&gt;/s</span>
<div class="abs" style="left:418px;top:116px;width:143px;height:74px;border-radius:4px;background:rgba(0,0,0,0.700)"></div>
<div class="abs" style="left:428px;top:155.800px;width:20px;height:3px;background:#4caf50"></div>
<div class="abs" style="left:428px;top:176px;width:20px;height:3px;background:#2196f3"></div>
<span class="t" style="top:127.00px;font-size:12px;left:432.30px;font-weight:700;color:#efefef;letter-spacing:0.142px;">2018-06-06 03:11:26</span>
<span class="t" style="top:151.00px;font-size:12px;left:453.30px;color:#d8d8d8;letter-spacing:-0.393px;">Débit:</span>
<span class="t" style="top:153.00px;font-size:12px;left:493.10px;font-weight:700;color:#efefef;letter-spacing:0.081px;">4.04 m<sup style="font-size:9.500px;line-height:0;vertical-align:4.500px">3</sup>/s</span>
<span class="t" style="top:170.00px;font-size:12px;left:453.30px;color:#d8d8d8;letter-spacing:-0.216px;">Hauteur:</span>
<span class="t" style="top:170.00px;font-size:12px;left:509.60px;font-weight:700;color:#efefef;letter-spacing:-0.077px;">0.72 m</span></div>
<div id="wobs" class="w"><span class="t" style="top:9.00px;font-size:16px;left:5.00px;letter-spacing:0.145px;">Observations</span>
<svg style="left:0;top:0" width="710" height="410" viewBox="730 580 710 410"><circle cx="1414" cy="602.900" r="4.600" fill="none" stroke="#212121" stroke-width="1.800"/><path d="M1417.300 606.200l5 5" stroke="#212121" stroke-width="2.100"/><path d="M826 621v13.500M819.500 628.500l6.500 6.500 6.500-6.500" fill="none" stroke="#212121" stroke-width="1.700"/><path d="M1223.500 966l3.700 3.700 3.700-3.700z" fill="#666"/><path d="M1375 961l-5.300 5.500 5.300 5.500" fill="none" stroke="#555" stroke-width="1.800"/><path d="M1409.500 961l5.300 5.500-5.300 5.500" fill="none" stroke="#555" stroke-width="1.800"/></svg>
<span class="t" style="top:42.00px;font-size:12px;left:12.00px;font-weight:700;letter-spacing:-0.205px;">Timestamp</span>
<span class="t" style="top:42.00px;font-size:12px;left:304.00px;font-weight:700;color:#757575;letter-spacing:-0.300px;">Débit</span>
<span class="t" style="top:42.00px;font-size:12px;left:500.30px;font-weight:700;color:#757575;letter-spacing:-0.335px;">Hauteur</span>
<div class="abs" style="left:0;top:40px;width:695px;height:323px;overflow:hidden">
<div class="ln" style="left:0;top:28px;width:696px;background:#dedede"></div>
<span class="t" style="top:41.00px;font-size:13px;left:12.00px;letter-spacing:-0.117px;">2018-06-19 00:47:15</span>
<span class="t" style="top:41.00px;font-size:13px;left:304.00px;letter-spacing:0.205px;">1.1 m3/s</span>
<span class="t" style="top:41.00px;font-size:13px;left:500.30px;letter-spacing:-0.042px;">0.33 m</span>
<div class="ln" style="left:0;top:66px;width:696px;background:#dedede"></div>
<span class="t" style="top:79.00px;font-size:13px;left:12.00px;letter-spacing:-0.117px;">2018-06-18 23:20:51</span>
<span class="t" style="top:79.00px;font-size:13px;left:304.00px;letter-spacing:0.212px;">1.18 m3/s</span>
<span class="t" style="top:79.00px;font-size:13px;left:500.30px;letter-spacing:-0.042px;">0.35 m</span>
<div class="ln" style="left:0;top:104px;width:696px;background:#dedede"></div>
<span class="t" style="top:117.00px;font-size:13px;left:12.00px;letter-spacing:-0.117px;">2018-06-18 21:54:27</span>
<span class="t" style="top:117.00px;font-size:13px;left:304.00px;letter-spacing:0.205px;">1.2 m3/s</span>
<span class="t" style="top:117.00px;font-size:13px;left:500.30px;letter-spacing:-0.042px;">0.35 m</span>
<div class="ln" style="left:0;top:142px;width:696px;background:#dedede"></div>
<span class="t" style="top:155.00px;font-size:13px;left:12.00px;letter-spacing:-0.117px;">2018-06-18 20:28:03</span>
<span class="t" style="top:155.00px;font-size:13px;left:304.00px;letter-spacing:0.212px;">1.28 m3/s</span>
<span class="t" style="top:155.00px;font-size:13px;left:500.30px;letter-spacing:-0.042px;">0.37 m</span>
<div class="ln" style="left:0;top:180px;width:696px;background:#dedede"></div>
<span class="t" style="top:193.00px;font-size:13px;left:12.00px;letter-spacing:-0.117px;">2018-06-18 19:01:39</span>
<span class="t" style="top:193.00px;font-size:13px;left:304.00px;letter-spacing:0.212px;">1.32 m3/s</span>
<span class="t" style="top:193.00px;font-size:13px;left:500.30px;letter-spacing:-0.042px;">0.37 m</span>
<div class="ln" style="left:0;top:218px;width:696px;background:#dedede"></div>
<span class="t" style="top:231.00px;font-size:13px;left:12.00px;letter-spacing:-0.117px;">2018-06-18 17:35:15</span>
<span class="t" style="top:231.00px;font-size:13px;left:304.00px;letter-spacing:0.212px;">1.25 m3/s</span>
<span class="t" style="top:231.00px;font-size:13px;left:500.30px;letter-spacing:-0.042px;">0.36 m</span>
<div class="ln" style="left:0;top:256px;width:696px;background:#dedede"></div>
<span class="t" style="top:269.00px;font-size:13px;left:12.00px;letter-spacing:-0.117px;">2018-06-18 16:08:51</span>
<span class="t" style="top:269.00px;font-size:13px;left:304.00px;letter-spacing:0.212px;">1.15 m3/s</span>
<span class="t" style="top:269.00px;font-size:13px;left:500.30px;letter-spacing:-0.042px;">0.34 m</span>
<div class="ln" style="left:0;top:294px;width:696px;background:#dedede"></div>
<span class="t" style="top:307.00px;font-size:13px;left:12.00px;letter-spacing:-0.117px;">2018-06-18 14:42:27</span>
<span class="t" style="top:307.00px;font-size:13px;left:304.00px;letter-spacing:0.212px;">0.98 m3/s</span>
<span class="t" style="top:307.00px;font-size:13px;left:500.30px;letter-spacing:-0.042px;">0.31 m</span>
</div>
<div class="ln" style="left:0;top:363px;width:710px;background:#dedede"></div>
<div class="abs" style="left:695px;top:29px;width:15px;height:334px;background:#f1f1f1"></div>
<div class="abs" style="left:697px;top:43px;width:11px;height:53px;background:#c1c1c1"></div>
<svg style="left:695px;top:29px" width="15" height="334" viewBox="0 0 15 334"><path d="M3.900 9h7L7.400 4.600z" fill="#a3a3a3"/><path d="M3.900 324h7L7.400 328.400z" fill="#505050"/></svg>
<span class="t" style="top:381.00px;font-size:12px;left:409.40px;color:#757575;letter-spacing:-0.272px;">Page:</span>
<span class="t" style="top:381.00px;font-size:12px;left:478.70px;color:#757575;letter-spacing:-0.688px;">1</span>
<span class="t" style="top:381.00px;font-size:12px;left:535.40px;color:#757575;letter-spacing:-0.092px;">1 - 50 of 488</span></div>
<div class="abs" style="left:1366px;top:1005.500px;width:56px;height:56px;border-radius:50%;background:#ff9300;box-shadow:0 2px 5px rgba(0,0,0,.26),0 1px 3px rgba(0,0,0,.2)"></div>
<svg style="left:1382px;top:1021.500px" width="24" height="24" viewBox="0 0 24 24"><path d="M3 17.250V21h3.750L17.810 9.940l-3.750-3.750L3 17.250zM20.710 7.040a1 1 0 0 0 0-1.410l-2.340-2.340a1 1 0 0 0-1.410 0l-1.830 1.830 3.750 3.750 1.830-1.830z" fill="#ffeed6"/></svg>
<span class="t" style="top:1069.00px;font-size:12px;left:1284.50px;letter-spacing:-0.138px;">Powered by</span>
<span class="t" style="top:1069.00px;font-size:12px;left:1349.50px;font-weight:700;color:#1565c0;letter-spacing:-0.529px;">GeoStorm IOT</span>
<div id="edge" class="abs"></div>
</body>
</html>
